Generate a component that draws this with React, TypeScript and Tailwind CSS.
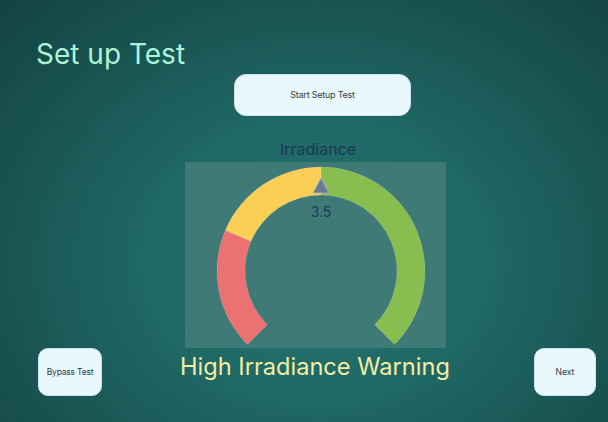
import React from 'react';

const CX = 136;
const CY = 109;
const R_OUT = 104;
const R_IN = 76;

// angle measured clockwise from 12 o'clock, in degrees
function pt(r: number, deg: number) {
  const a = (deg * Math.PI) / 180;
  return [CX + r * Math.sin(a), CY - r * Math.cos(a)];
}

function sector(from: number, to: number) {
  const [x1, y1] = pt(R_OUT, from);
  const [x2, y2] = pt(R_OUT, to);
  const [x3, y3] = pt(R_IN, to);
  const [x4, y4] = pt(R_IN, from);
  const large = to - from > 180 ? 1 : 0;
  return `M${x1} ${y1} A${R_OUT} ${R_OUT} 0 ${large} 1 ${x2} ${y2} L${x3} ${y3} A${R_IN} ${R_IN} 0 ${large} 0 ${x4} ${y4} Z`;
}

const segments = [
  { from: -135, to: -67, color: '#ec7173' },
  { from: -67, to: 0, color: '#fbcf55' },
  { from: 0, to: 135, color: '#88bd4f' },
];

function Gauge() {
  return (
    <svg width="261" height="186" viewBox="0 0 261 186">
      {segments.map((s) => (
        <path key={s.from} d={sector(s.from, s.to)} fill={s.color} stroke="rgba(255,255,255,0.25)" strokeWidth="0.6" />
      ))}
      <polygon points="136,16 128,31 144,31" fill="#6b7b8d" stroke="#9fb0bf" strokeWidth="1" strokeLinejoin="round" />
      <text x="136" y="55" textAnchor="middle" fontSize="14" fill="#1d3a58" style={{ fontFamily: 'Inter, sans-serif' }}>
        3.5
      </text>
    </svg>
  );
}

export default function App() {
  return (
    <div className="w-[608px] h-[422px] overflow-hidden flex flex-col bg-[radial-gradient(ellipse_at_52%_62%,#247773_0%,#1f6764_40%,#18514f_75%,#144241_100%)] font-['Inter',sans-serif]">
      <h1 className="pt-[36px] pl-[36px] text-[28px] leading-[36px] text-[#aef3d6] font-normal">Set up Test</h1>

      <button className="ml-[234px] mt-[2px] w-[177px] h-[42px] rounded-[12px] bg-[#e9f8fd] border border-[#cfe3ea] text-[9px] text-[#333c46] tracking-tight">
        Start Setup Test
      </button>

      <div className="ml-[185px] w-[266px] mt-[23px] text-center text-[16px] leading-[20px] text-[#1b3654]">Irradiance</div>

      <div className="ml-[185px] mt-[3px] w-[261px] h-[186px] bg-[#3f7a77]">
        <Gauge />
      </div>

      <div className="flex items-start pl-[38px] pr-[12px]">
        <button className="w-[64px] h-[48px] rounded-[10px] bg-[#e9f8fd] border border-[#cfe3ea] text-[8.5px] text-[#333c46] tracking-tight">
          Bypass Test
        </button>
        <div className="ml-[78px] mt-[4px] text-[23.6px] leading-[30px] text-[#f4eda2]">High Irradiance Warning</div>
        <button className="ml-auto w-[62px] h-[48px] rounded-[10px] bg-[#e9f8fd] border border-[#cfe3ea] text-[8.5px] text-[#333c46]">
          Next
        </button>
      </div>
    </div>
  );
}
